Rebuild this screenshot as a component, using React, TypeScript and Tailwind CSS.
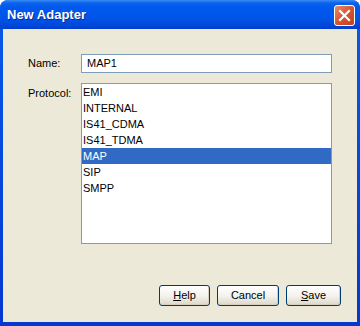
const protocols = ["EMI", "INTERNAL", "IS41_CDMA", "IS41_TDMA", "MAP", "SIP", "SMPP"]

const XpButton = ({ width, children }: { width: string; children: React.ReactNode }) => (
    <button
        className={`${width} h-[21px] rounded-[3px] border border-[#003c74] bg-gradient-to-b from-white via-[#f4f3ee] to-[#dcd8c8] text-[11px] text-black shadow-[inset_-1px_-1px_0_#d6d0c0]`}
    >
        {children}
    </button>
)

export default function App() {
    return (
        <div className="w-[360px] h-[326px] bg-white font-['Liberation_Sans',Arial,sans-serif]">
            <div className="flex flex-col w-full h-full rounded-t-[8px] overflow-hidden bg-gradient-to-b from-[#0b5ae9] to-[#0637cf]">
                {/* title bar */}
                <div className="h-[29px] shrink-0 flex items-center justify-between pl-[7px] pr-[5px] bg-[linear-gradient(to_bottom,#3b8cf5_0px,#0a62ed_3px,#0058ee_8px,#0055e8_18px,#0049db_25px,#003ccb_29px)]">
                    <span className="text-white font-bold text-[13px] mt-[1px] [text-shadow:1px_1px_0_#0b2a8e]">New Adapter</span>
                    <div className="w-[21px] h-[21px] mt-[1px] rounded-[3px] border border-white bg-gradient-to-br from-[#e88a6c] via-[#d6552f] to-[#c2411c] flex items-center justify-center">
                        <svg width="13" height="13" viewBox="0 0 13 13">
                            <path d="M2 2 L11 11 M11 2 L2 11" stroke="white" strokeWidth="2.2" strokeLinecap="square" />
                        </svg>
                    </div>
                </div>
                {/* body */}
                <div className="flex-1 flex flex-col mx-[3px] mb-[4px] bg-[#ece9d8] pt-[25px] pl-[25px] pr-[25px] pb-[16px] text-[11px] text-black">
                    <div className="flex items-center">
                        <span className="w-[53px]">Name:</span>
                        <div className="flex-1 h-[19px] border border-[#7f9db9] bg-white flex items-center pl-[5px]">MAP1</div>
                    </div>
                    <div className="flex mt-[10px]">
                        <span className="w-[53px] pt-[2px]">Protocol:</span>
                        <div className="flex-1 h-[161px] border border-[#7f9db9] bg-white">
                            {protocols.map((p) => (
                                <div
                                    key={p}
                                    className={`h-[16px] leading-[16px] pl-[1px] ${p === "MAP" ? "bg-[#316ac5] text-white" : ""}`}
                                >
                                    {p}
                                </div>
                            ))}
                        </div>
                    </div>
                    <div className="mt-auto flex justify-end gap-[7px] pr-[-9px] -mr-[9px]">
                        <XpButton width="w-[51px]"><span className="underline">H</span>elp</XpButton>
                        <XpButton width="w-[62px]">Cancel</XpButton>
                        <XpButton width="w-[55px]"><span className="underline">S</span>ave</XpButton>
                    </div>
                </div>
            </div>
        </div>
    )
}
